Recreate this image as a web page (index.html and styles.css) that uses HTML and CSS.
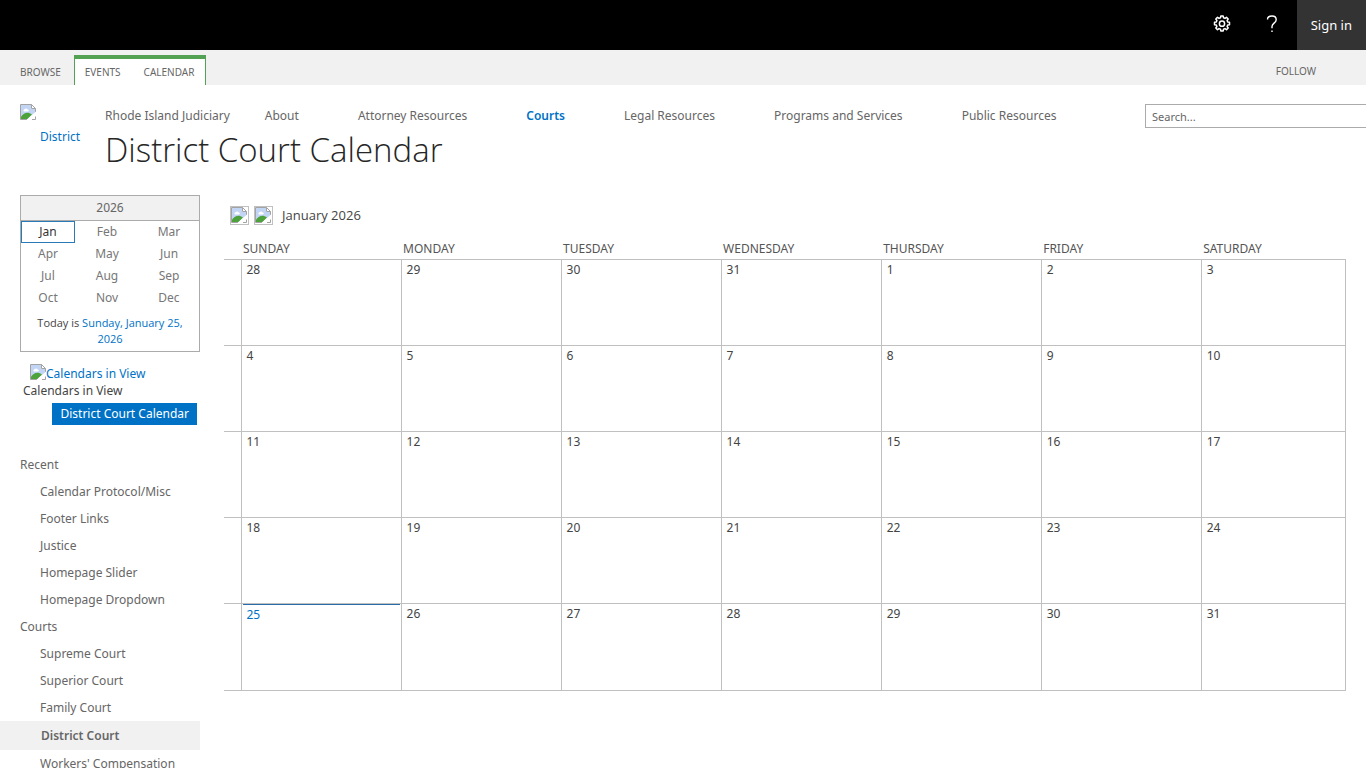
FILE: index.html
```html
<!DOCTYPE html>
<html lang="en">
<head>
<meta charset="utf-8">
<title>District Court Calendar</title>
<link rel="stylesheet" href="styles.css">
</head>
<body>
<svg class="defs" aria-hidden="true">
  <symbol id="missing" viewBox="0 0 16 16">
    <path fill="#fff" d="M0.5 0.5H11.5L15.5 4.5V15.5H0.5Z"/>
    <path fill="#c3d5f5" d="M1 1H11V5H15V9L8 14H1Z"/>
    <path fill="#fff" d="M3.500 6.500a1.500 1.500 0 0 1 1.500-1.500a1.500 1.500 0 0 1 2.500 0.500a1 1 0 0 1 0.500 2H4a1 1 0 0 1-.5-1z"/>
    <path fill="#4ea23c" d="M1 15V12.500C4 8.500 8 7.500 12 10.500L7.500 15Z"/>
    <path fill="none" stroke="#a3a3a3" d="M15.500 9V4.500L11.500 0.500H0.500V15.500H7M11.500 0.500V4.500H15.500M12 15.500H15.500V12.500"/>
    <path fill="#fff" d="M16 7.500V11L11 16H6.500Z"/>
  </symbol>
</svg>
<header class="suite-bar">
  <button class="suite-button" type="button" aria-label="Settings">
    <svg width="18" height="18" viewBox="0 0 18 18" fill="none" stroke="#fff" stroke-width="1.500" stroke-linejoin="round"><path d="M7.500 2.800 7.800 1h2.400l.3 1.800 1.500.6 1.500-1.100 1.700 1.700-1.100 1.500.6 1.500 1.800.3v2.400l-1.800.3-.6 1.500 1.100 1.500-1.700 1.700-1.500-1.100-1.500.6-.3 1.800H7.800l-.3-1.800-1.500-.6-1.500 1.100L2.800 13l1.100-1.500-.6-1.500-1.800-.3V7.300L3.300 7l.6-1.500L2.800 4l1.700-1.700L6 3.400z"/><circle cx="9" cy="8.700" r="2.600"/></svg>
  </button>
  <button class="suite-button" type="button" aria-label="Help">
    <svg width="12" height="18" viewBox="0 0 12 18" fill="none" stroke="#fff" stroke-width="1.400"><path d="M1.500 4.500C1.500 2 3.500 1 6 1c2.500 0 4.200 1.400 4.200 3.700C10.200 8 6 8.300 6 11.500v1.800M6 15.500V17"/></svg>
  </button>
  <a class="sign-in" href="#">Sign in</a>
</header>
<div class="ribbon">
  <button class="tab" type="button">BROWSE</button>
  <div class="tab-group">
    <button class="tab" type="button">EVENTS</button>
    <button class="tab" type="button">CALENDAR</button>
  </div>
  <button class="follow" type="button">FOLLOW</button>
</div>
<div class="masthead">
  <a class="logo" href="#"><svg class="missing"><use href="#missing"/></svg><span>District</span></a>
  <div class="heading">
    <div class="heading-row">
      <nav class="top-nav">
        <a class="home" href="#">Rhode Island Judiciary</a>
        <a href="#">About</a>
        <a href="#">Attorney Resources</a>
        <a class="current" href="#">Courts</a>
        <a href="#">Legal Resources</a>
        <a href="#">Programs and Services</a>
        <a href="#">Public Resources</a>
      </nav>
      <input class="search" type="search" placeholder="Search..." aria-label="Search">
    </div>
    <h1>District Court Calendar</h1>
  </div>
</div>
<div class="page">
  <aside class="sidebar">
    <div class="picker">
      <div class="year">2026</div>
      <table class="months">
        <tr><td class="chosen"><a href="#">Jan</a></td><td class="mid"><a href="#">Feb</a></td><td><a href="#">Mar</a></td></tr>
        <tr><td><a href="#">Apr</a></td><td><a href="#">May</a></td><td><a href="#">Jun</a></td></tr>
        <tr><td><a href="#">Jul</a></td><td><a href="#">Aug</a></td><td><a href="#">Sep</a></td></tr>
        <tr><td><a href="#">Oct</a></td><td><a href="#">Nov</a></td><td><a href="#">Dec</a></td></tr>
      </table>
      <p class="today-line">Today is <a href="#">Sunday, January 25, 2026</a></p>
    </div>
    <div class="in-view">
      <a class="in-view-link" href="#"><svg class="missing"><use href="#missing"/></svg>Calendars in View</a>
      <div class="in-view-title">Calendars in View</div>
      <a class="in-view-item" href="#">District Court Calendar</a>
    </div>
    <nav class="side-nav">
      <a href="#">Recent</a>
      <a class="sub" href="#">Calendar Protocol/Misc</a>
      <a class="sub" href="#">Footer Links</a>
      <a class="sub" href="#">Justice</a>
      <a class="sub" href="#">Homepage Slider</a>
      <a class="sub" href="#">Homepage Dropdown</a>
      <a href="#">Courts</a>
      <a class="sub" href="#">Supreme Court</a>
      <a class="sub" href="#">Superior Court</a>
      <a class="sub" href="#">Family Court</a>
      <a class="sub selected" href="#">District Court</a>
      <a class="sub" href="#">Workers' Compensation</a>
    </nav>
  </aside>
  <main class="content">
    <div class="month-bar">
      <button class="step" type="button" aria-label="Previous month"><svg class="missing"><use href="#missing"/></svg></button>
      <button class="step" type="button" aria-label="Next month"><svg class="missing"><use href="#missing"/></svg></button>
      <span class="month-name">January 2026</span>
    </div>
    <table class="calendar">
      <thead>
        <tr><th class="gutter"></th><th class="day">SUNDAY</th><th class="day">MONDAY</th><th class="day">TUESDAY</th><th class="day">WEDNESDAY</th><th class="day">THURSDAY</th><th class="day">FRIDAY</th><th>SATURDAY</th></tr>
      </thead>
      <tbody>
        <tr><td class="gutter"></td><td>28</td><td>29</td><td>30</td><td>31</td><td>1</td><td>2</td><td>3</td></tr>
        <tr><td class="gutter"></td><td>4</td><td>5</td><td>6</td><td>7</td><td>8</td><td>9</td><td>10</td></tr>
        <tr><td class="gutter"></td><td>11</td><td>12</td><td>13</td><td>14</td><td>15</td><td>16</td><td>17</td></tr>
        <tr><td class="gutter"></td><td>18</td><td>19</td><td>20</td><td>21</td><td>22</td><td>23</td><td>24</td></tr>
        <tr><td class="gutter"></td><td class="now"><div>25</div></td><td>26</td><td>27</td><td>28</td><td>29</td><td>30</td><td>31</td></tr>
      </tbody>
    </table>
  </main>
</div>
</body>
</html>
```
FILE: styles.css
```css
* { box-sizing: border-box; }
body {
  margin: 0;
  overflow: hidden;
  background: #fff;
  color: #444;
  font: 12px/17px "Noto Sans", "Open Sans", sans-serif;
}
a { color: #666; text-decoration: none; }
button { border: 0; padding: 0; background: none; color: inherit; font: inherit; cursor: pointer; }
.defs { position: absolute; width: 0; height: 0; }
.missing { display: block; flex: none; width: 16px; height: 16px; }

.suite-bar { display: flex; justify-content: flex-end; height: 50px; background: #000; }
.suite-button { display: flex; align-items: center; justify-content: center; width: 50px; padding-bottom: 2px; }
.sign-in { padding: 0 14px; background: #333; color: #fff; font-size: 13px; line-height: 50px; }

.ribbon { display: flex; align-items: flex-end; height: 35px; padding: 0 50px 0 20px; background: #f1f1f1; color: #666; font-size: 10px; line-height: 27px; }
.tab { line-height: 25px; }
.tab-group { display: flex; gap: 23px; height: 30px; margin-left: 13px; padding: 0 11px 0 10px; border: solid #53a153; border-width: 4px 1px 0; align-items: flex-end; background: #fff; }
.follow { margin-left: auto; }

.masthead { display: flex; padding-top: 19px; height: 110px; }
.logo { display: flex; flex-direction: column; gap: 8px; width: 105px; flex: none; padding-left: 20px; color: #0072c6; }
.logo span { padding-left: 20px; }
.heading { flex: 1; min-width: 0; }
.heading-row { display: flex; align-items: center; justify-content: space-between; height: 24px; }
.top-nav { display: flex; gap: 59px; padding-bottom: 2px; white-space: nowrap; }
.top-nav .home { margin-right: -24px; }
.top-nav .current { color: #0072c6; font-weight: 600; }
.search { width: 221px; height: 24px; padding: 0 6px; border: 1px solid #ababab; border-right: 0; border-radius: 0; font: inherit; font-size: 11px; color: #444; outline: 0; }
.search::placeholder { color: #666; opacity: 1; }
h1 { margin: 0; color: #262626; font-family: "Open Sans", sans-serif; font-size: 33px; line-height: 44px; font-weight: 300; }

.page { display: flex; gap: 24px; padding-right: 20px; }
.sidebar { flex: none; width: 200px; }
.picker { margin-left: 20px; border: 1px solid #ababab; text-align: center; }
.year { height: 25px; line-height: 24px; border-bottom: 1px solid #ababab; background: #f1f1f1; color: #666; }
.months { width: 100%; table-layout: fixed; border-collapse: separate; border-spacing: 0; }
.months td { height: 22px; padding: 0; border: 1px solid transparent; line-height: 20px; }
.months td:first-child { width: 54px; }
.months .mid { width: 64px; }
.months a { color: #777; }
.months td.chosen { border-color: #2a7ab8; }
.months .chosen a { color: #333; }
.today-line { margin: 0; padding: 6px 10px 4px; font-family: "Open Sans", sans-serif; font-size: 11px; line-height: 16px; }
.today-line a { color: #0072c6; }
.in-view { padding: 12px 3px 0 23px; }
.in-view-link { display: flex; padding-left: 7px; color: #0072c6; line-height: 19px; }
.in-view-title { line-height: 16px; }
.in-view-item { display: block; width: max-content; margin: 4px 0 0 auto; padding: 0 8px; background: #0072c6; color: #fff; line-height: 22px; }
.side-nav { padding-top: 26px; }
.side-nav a { display: block; padding-left: 20px; line-height: 27px; white-space: nowrap; }
.side-nav .sub { padding-left: 40px; }
.side-nav .selected { padding-left: 41px; background: #f1f1f1; font-weight: 600; line-height: 29px; }

.content { flex: 1; min-width: 0; }
.month-bar { display: flex; align-items: center; gap: 5px; height: 40px; padding-left: 6px; }
.step { border: 1px solid #c0c0c0; padding: 0 1px 1px 0; }
.month-name { padding-left: 4px; font-family: "Open Sans", sans-serif; font-size: 13px; }
.calendar { width: 100%; table-layout: fixed; border-collapse: collapse; }
.calendar th { height: 24px; padding: 5px 2px 0; color: #555; font-weight: 400; text-align: left; line-height: 16px; }
.calendar .gutter { width: 17px; border-left: 0; }
.calendar .day { width: 14.27%; }
.calendar td { height: 86px; padding: 1px 5px; border: 1px solid #c0c0c0; vertical-align: top; }
.calendar td.now { height: 87px; padding: 0 1px; color: #0072c6; }
.now div { padding: 1px 4px; border-top: 1px solid #2a6ca8; }
```
